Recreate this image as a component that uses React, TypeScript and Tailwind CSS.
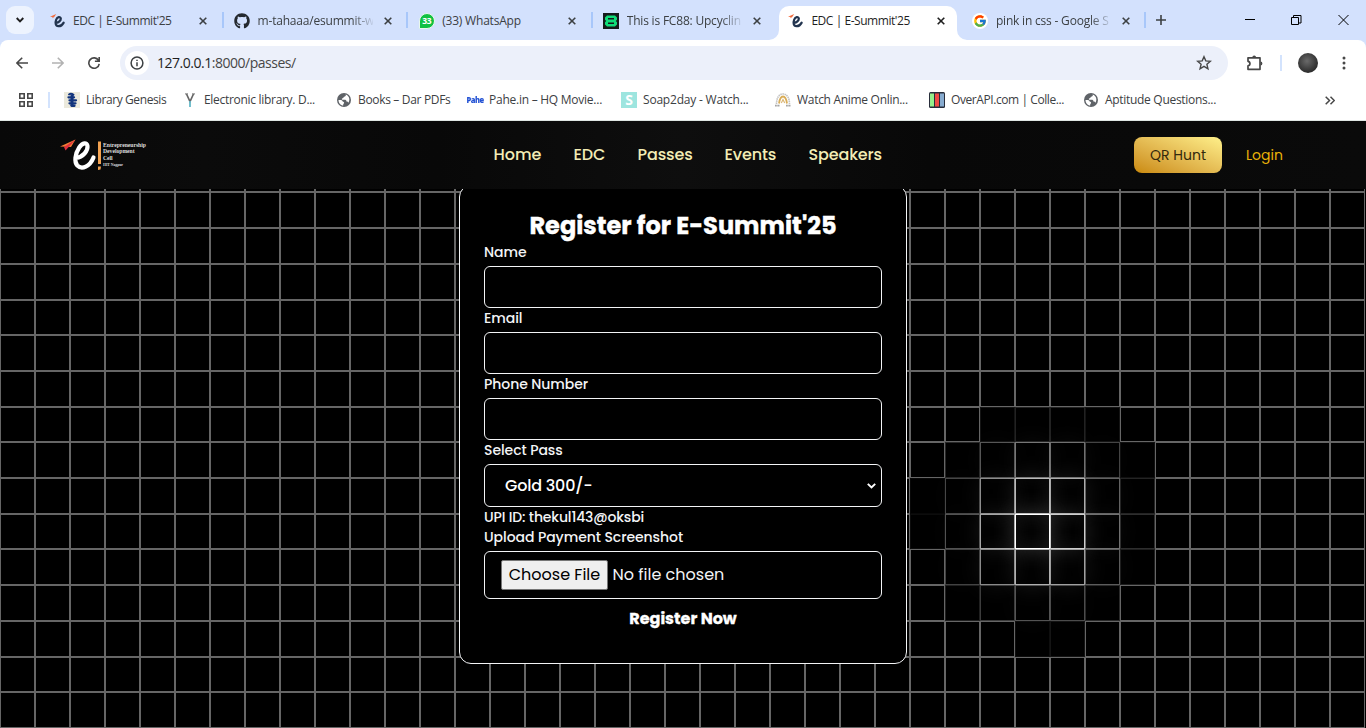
import React from "react";
import { FaGithub } from "react-icons/fa";
import { FcGoogle } from "react-icons/fc";

const uiFont = "font-['Open_Sans','Noto_Sans',sans-serif]";
const siteFont = "font-['Poppins','Inter',sans-serif]";

function Favicon() {
  return (
    <svg width="16" height="16" viewBox="0 0 16 16" fill="none">
      <path d="M6.1 9.800 C8.6 9.500 11 7.600 10.800 5.500 C10.4 3.200 7.4 3.800 6.2 6.600 C5 9.600 5.400 13 8.400 13.200 C10.600 13.300 12.500 11.800 13.700 9.600" stroke="#22344f" strokeWidth="2.2" strokeLinecap="round" />
      <path d="M0 3.800 L6.2 1 L4.6 3.400 L2.6 5.200 L2.4 3.900 Z" fill="#f26b3d" />
    </svg>
  );
}

function WhatsApp() {
  return (
    <span className="flex size-4 items-center justify-center rounded-full rounded-bl-[3px] border border-[#e9f8ec] bg-[#10c143] font-['Open_Sans',sans-serif] text-[8.500px] font-bold tracking-[-0.3px] text-white">
      33
    </span>
  );
}

function Freecodecamp() {
  return (
    <svg width="16" height="16" viewBox="0 0 16 16">
      <rect width="16" height="16" fill="#151a1a" />
      <path d="M4 2.500h8l2 2v2.200L12.800 8 14 9.300v2.200l-2 2H4l-2-2V9.300L3.200 8 2 6.700V4.500z" fill="#10dc78" />
      <path d="M5 5.700h6M5 10.300h6" stroke="#151a1a" strokeWidth="1.600" />
    </svg>
  );
}

function Google() {
  return (
    <span className="flex size-4 items-center justify-center rounded-full bg-white">
      <FcGoogle size={14} />
    </span>
  );
}

function Cross({ dark }: { dark?: boolean }) {
  return (
    <svg width="8" height="8" viewBox="0 0 8 8" className="shrink-0">
      <path d="M0.700 0.700 7.300 7.300M7.300 0.700 0.700 7.300" stroke={dark ? "#1f1f1f" : "#3c4043"} strokeWidth="1.600" />
    </svg>
  );
}

type TabInfo = { title: string; icon: React.ReactNode; active?: boolean; fade?: boolean; sep?: boolean; tracking: string };

const tabs: TabInfo[] = [
  { title: "EDC | E-Summit'25", icon: <Favicon />, sep: true, tracking: "tracking-[-0.45px]" },
  { title: "m-tahaaa/esummit-w", icon: <FaGithub size={16} color="#24292f" />, fade: true, sep: true, tracking: "tracking-[-0.2px]" },
  { title: "(33) WhatsApp", icon: <WhatsApp />, sep: true, tracking: "tracking-[-0.2px]" },
  { title: "This is FC88: Upcyclin", icon: <Freecodecamp />, fade: true, tracking: "tracking-[-0.2px]" },
  { title: "EDC | E-Summit'25", icon: <Favicon />, active: true, tracking: "tracking-[-0.45px]" },
  { title: "pink in css - Google S", icon: <Google />, fade: true, sep: true, tracking: "tracking-[-0.2px]" },
];

function Tab({ tab }: { tab: TabInfo }) {
  return (
    <div className="flex h-[34px] w-[184.600px] shrink-0">
      <div className={`relative flex w-[178px] items-center pb-[8px] pl-[9px] pt-[4px] ${tab.active ? "rounded-t-[10px] bg-white" : ""}`}>
        {tab.active && (
          <>
            <svg className="absolute -left-[10px] bottom-0" width="10" height="10"><path d="M10 0v10H0A10 10 0 0 0 10 0" fill="#fff" /></svg>
            <svg className="absolute -right-[10px] bottom-0" width="10" height="10"><path d="M0 0v10h10A10 10 0 0 1 0 0" fill="#fff" /></svg>
          </>
        )}
        <span className="mr-[7.500px] flex size-4 shrink-0 items-center justify-center">{tab.icon}</span>
        <span
          className={`w-[115px] shrink-0 overflow-hidden whitespace-nowrap text-[12px] leading-4 ${tab.tracking} ${tab.active ? "text-[#1f1f1f]" : "text-[#3c4043]"} ${tab.fade ? "[mask-image:linear-gradient(90deg,#000_94px,transparent_117px)]" : ""}`}
        >
          {tab.title}
        </span>
        <span className="ml-[11px]"><Cross dark={tab.active} /></span>
      </div>
      <div className="flex w-[6.600px] pl-[3px] pt-[6px]">
        {tab.sep && <span className="h-4 w-[2px] bg-[#a8c7fa]" />}
      </div>
    </div>
  );
}

function TabStrip() {
  return (
    <div className="flex h-[40px] bg-[#d3e1fd] pt-[6px]">
      <div className="ml-[6px] mr-[6.500px] flex size-7 items-center justify-center rounded-[9px] bg-[#edf3fe]">
        <svg width="8" height="6" viewBox="0 0 8 6" fill="none"><path d="M0.700 1 4 4.300 7.300 1" stroke="#1f1f1f" strokeWidth="1.900" /></svg>
      </div>
      {tabs.map((tab, i) => <Tab key={i} tab={tab} />)}
      <svg className="ml-[7px] mt-[8px]" width="12" height="12" viewBox="0 0 12 12"><path d="M6 1v10M1 6h10" stroke="#3c4043" strokeWidth="1.600" /></svg>
      <div className="ml-auto mr-[17px] flex gap-[36px] pt-[8px]">
        <svg width="10" height="12"><path d="M0 5.500h10" stroke="#000" /></svg>
        <svg width="11" height="12" fill="none" stroke="#000"><path d="M0.500 3.500h7v7h-7zM2.500 3.500v-2h7.500v7.500h-2.500" /></svg>
        <svg width="11" height="12" fill="none" stroke="#000"><path d="M0.500 1 10.500 11M10.500 1 0.500 11" /></svg>
      </div>
    </div>
  );
}

function Toolbar() {
  return (
    <div className="bg-[#d3e1fd]">
      <div className="flex h-[46px] items-center rounded-t-[8px] bg-white pl-[16px]">
        <svg width="12" height="12" viewBox="0 0 12 12" fill="none" stroke="#474747" strokeWidth="1.600"><path d="M12 6H1M6.200 0.700 0.900 6l5.300 5.300" /></svg>
        <svg className="ml-[24px]" width="12" height="12" viewBox="0 0 12 12" fill="none" stroke="#b2b2b2" strokeWidth="1.600"><path d="M0 6h11M5.800 0.700 11.100 6l-5.300 5.300" /></svg>
        <svg className="ml-[24px]" width="12" height="12" viewBox="0 0 12 12" fill="none" stroke="#474747" strokeWidth="1.600"><path d="M10.500 3.400A5.200 5.200 0 1 0 11.200 6.800M11.200 0v4.300H6.900" /></svg>
        <div className="ml-[20px] flex h-[34px] w-[1108px] items-center rounded-full bg-[#ecf0fa] pl-[5px] pr-[16px]">
          <span className="flex size-6 items-center justify-center rounded-full bg-white">
            <svg width="14" height="14" viewBox="0 0 14 14" fill="none" stroke="#3c4043" strokeWidth="1.500"><circle cx="7" cy="7" r="5.900" /><path d="M7 6.200v4M7 3.700v1.400" /></svg>
          </span>
          <span className="ml-[8px] text-[14px] leading-5 tracking-[-0.480px] text-[#474747]"><span className="text-[#1f1f1f]">127.0.0.1</span>:8000/passes/</span>
          <svg className="ml-auto" width="16" height="16" viewBox="0 0 16 16" fill="none" stroke="#474747" strokeWidth="1.400"><path d="m8 1.700 1.800 4.200 4.600.4-3.500 3 1.050 4.500L8 11.400l-3.950 2.400L5.100 9.300l-3.500-3 4.600-.4z" /></svg>
        </div>
        <svg className="ml-[18px]" width="18" height="18" viewBox="0 0 18 18"><path d="M2 3.800h12v11.500H2v-3.400c2.600-.4 2.600-4.200 0-4.600z" fill="none" stroke="#474747" strokeWidth="1.700" strokeLinejoin="round" /><path d="M6.300 3.400a1.900 1.900 0 0 1 3.800 0zM14.500 7.600a1.900 1.900 0 0 1 0 3.800z" fill="#474747" /></svg>
        <span className="ml-[16px] h-4 w-[2px] bg-[#d3e3fd]" />
        <span className="ml-[16px] size-5 rounded-full bg-[radial-gradient(circle_at_45%_40%,#6a6a6a,#3a3a3a_55%,#161616)]" />
        <svg className="ml-[24px]" width="4" height="14" viewBox="0 0 4 14" fill="#474747"><circle cx="2" cy="2" r="1.500" /><circle cx="2" cy="7" r="1.500" /><circle cx="2" cy="12" r="1.500" /></svg>
      </div>
    </div>
  );
}

function Globe() {
  return (
    <svg width="14" height="14" viewBox="0 0 14 14">
      <circle cx="7" cy="7" r="7" fill="#5f6368" />
      <path d="M8.500 1.500c1 1.200-.3 2-1.400 2.300-.8.300-.2 1.300-1.500 1.500-.8.200-1 .9-.4 1.500h3.200c1 .4 1 1.300 1 1.800 1.100 0 1.700.5 2 1.200 1.800-2.600 1.300-7-2.900-8.300zM1.500 6.900l2.300.1c1.700.2 1.500 1.500 2.500 1.700 1.200.3.900 1.700.2 2.100-.4.400-.3 1-.3 1.700C3.500 12.300 1.500 9.800 1.500 6.900z" fill="#fff" />
    </svg>
  );
}

function LibraryIcon() {
  return (
    <svg width="16" height="16" viewBox="0 0 16 16">
      <rect width="16" height="16" fill="#ebe9dc" />
      <path d="M5 2.500c1-.8 3-.8 4.500.3" stroke="#12347d" strokeWidth="1.800" strokeLinecap="round" fill="none" />
      <path d="M4.500 5.300h5.500M5.500 8.300h6.500M5.500 11.300h6M7.500 13.800h3" stroke="#12347d" strokeWidth="2.300" strokeLinecap="round" />
      <path d="M8 3v11" stroke="#12347d" strokeWidth="3" />
    </svg>
  );
}

function VIcon() {
  return (
    <svg width="10" height="14" viewBox="0 0 10 14" fill="none"><path d="M1.500 1 5 8.500 8.500 1" stroke="#666" strokeWidth="1.700" /><path d="M0 .900h3M7 .900h3" stroke="#777" /><path d="M5 8v6" stroke="#65b8c8" strokeWidth="1.800" /></svg>
  );
}

function AnimeIcon() {
  return (
    <svg width="16" height="16" viewBox="0 0 16 16" fill="none">
      <path d="M1.500 12C1.500 6 4 2 8 2s6.500 4 6.500 10" stroke="#c4c4c4" strokeWidth="1.600" strokeDasharray="1.500 .6" />
      <path d="M4 11.500C4.500 8 6 4.500 8 4.500s3.500 3.500 4 7" stroke="#d9ad58" strokeWidth="1.800" />
      <path d="M6.300 11 8 7.500 9.700 11" stroke="#dcb878" strokeWidth="1.200" />
      <path d="M0 13.700h5M11 13.700h5" stroke="#a5a5a5" strokeWidth="1.700" strokeDasharray="1.800 .5" />
    </svg>
  );
}

function ApiIcon() {
  return (
    <svg width="16" height="16" viewBox="0 0 16 16"><rect width="16" height="16" rx="1.500" fill="#282d3b" /><path d="M1 1.500h4v13H1z" fill="#96ef8b" /><path d="M6 1.500h4v13H6z" fill="#ef4b45" /><path d="M11 1.500h4v13h-4z" fill="#88acd0" /></svg>
  );
}

const bookmarks = [
  { title: "Library Genesis", icon: <LibraryIcon />, width: "w-[118px]", tracking: "tracking-[-0.400px]" },
  { title: "Electronic library. D...", icon: <VIcon />, width: "w-[154px]", tracking: "tracking-[-0.300px]" },
  { title: "Books – Dar PDFs", icon: <Globe />, width: "w-[131px]", tracking: "tracking-[-0.330px]" },
  { title: "Pahe.in – HQ Movie...", icon: <span className="scale-y-125 font-['Open_Sans',sans-serif] text-[7.500px] font-extrabold tracking-[-0.500px] text-[#2453d4]">Pahe</span>, width: "w-[154px]", tracking: "tracking-[-0.250px]" },
  { title: "Soap2day - Watch...", icon: <span className="flex size-4 items-center justify-center bg-[#9de5df] text-[14px] font-bold leading-4 text-white">S</span>, width: "w-[154px]", tracking: "tracking-[-0.200px]" },
  { title: "Watch Anime Onlin...", icon: <AnimeIcon />, width: "w-[154px]", tracking: "tracking-[-0.300px]" },
  { title: "OverAPI.com | Colle...", icon: <ApiIcon />, width: "w-[154px]", tracking: "tracking-[-0.420px]" },
  { title: "Aptitude Questions...", icon: <Globe />, width: "w-[154px]", tracking: "tracking-[-0.300px]" },
];

function BookmarkBar() {
  return (
    <div className="flex h-[35px] items-center border-b border-[#dfe6e3] bg-white pb-[6px] pl-[19px]">
      <svg width="14" height="14" viewBox="0 0 14 14" fill="none" stroke="#474747" strokeWidth="1.600"><path d="M.8.800h4.400v4.400H.8zM8.800.800h4.400v4.400H8.800zM.8 8.800h4.400v4.400H.8zM8.800 8.800h4.400v4.400H8.800z" /></svg>
      <span className="ml-[15px] mr-[14px] h-4 w-[2px] bg-[#d3e3fd]" />
      {bookmarks.map((b) => (
        <div key={b.title} className={`flex shrink-0 items-center ${b.width}`}>
          <span className="mr-[6px] flex size-4 shrink-0 items-center justify-center">{b.icon}</span>
          <span className={`whitespace-nowrap text-[12px] leading-4 text-[#3c4043] ${b.tracking}`}>{b.title}</span>
        </div>
      ))}
      <svg className="ml-auto mr-[31px]" width="10" height="9" viewBox="0 0 10 9" fill="none" stroke="#474747" strokeWidth="1.500"><path d="m.7.700 3.800 3.800L.7 8.300M5.500.700l3.800 3.800L5.500 8.300" /></svg>
    </div>
  );
}

const COLUMNS = 39;
const ROWS = 17;

// Border brightness (0-255) of the cells around the spotlight, keyed by row then column.
const spotlight: Record<number, Record<number, number>> = {
  8: { 28: 20, 29: 34, 30: 34, 31: 20 },
  9: { 27: 40, 28: 86, 29: 118, 30: 112, 31: 68, 32: 16 },
  10: { 26: 8, 27: 70, 28: 140, 29: 185, 30: 172, 31: 98, 32: 36 },
  11: { 26: 12, 27: 82, 28: 165, 29: 255, 30: 205, 31: 112, 32: 46 },
  12: { 27: 66, 28: 138, 29: 176, 30: 160, 31: 92, 32: 30 },
  13: { 27: 32, 28: 60, 29: 84, 30: 76, 31: 42 },
  14: { 29: 14, 30: 20 },
};

function GridBackdrop() {
  const cells = [];
  for (let r = 0; r < ROWS; r++) {
    for (let c = 0; c < COLUMNS; c++) {
      const v = spotlight[r]?.[c];
      const style =
        v === undefined
          ? undefined
          : {
              borderColor: `rgb(${v},${v},${v})`,
              boxShadow: v > 60 ? `0 0 24px rgba(255,255,255,${((v / 255) ** 2 * 0.24).toFixed(3)})` : undefined,
            };
      cells.push(<span key={`${r}-${c}`} className="border border-[#666]" style={style} />);
    }
  }
  return (
    <div className="col-start-1 row-start-1 grid h-[607px] w-[1365px] grid-cols-[repeat(39,35px)] grid-rows-[repeat(17,minmax(0,1fr))] bg-black">
      {cells}
    </div>
  );
}

function Logo() {
  return (
    <div className="flex h-[34px] w-[90px] items-center">
      <svg className="shrink-0" width="42" height="34" viewBox="59 138 42 34" fill="none">
        <path d="M76 158C83 157 88 151 87.500 146c-.5-4-5-3.500-8.300 1.500-4.200 6.500-5.200 14.500-1.900 18 4.500 4.500 12.700 1 16.200-8" stroke="#fff" strokeWidth="4.200" strokeLinecap="round" />
        <path d="M60 146.500 75.500 139.500 71 147z" fill="#f47b35" />
        <path d="M64 147 75.500 139.500 65.500 150.500z" fill="#df2f3d" />
        <path d="M98 141.500h3v22.500h-3zM98 166.500h3l-.5 3-2.500.5z" fill="#f2a251" />
      </svg>
      <div className="ml-[2px] whitespace-nowrap font-['Liberation_Serif',serif] text-[5.700px] font-bold leading-[6.300px] tracking-[-0.030px] text-[#ddd]">
        <div>Entrepreneurship</div>
        <div>Development</div>
        <div>Cell</div>
        <div className="pt-[1px] text-[3.800px]">IIIT Nagpur</div>
      </div>
    </div>
  );
}

const links = [
  { label: "Home", width: "w-[80px]", tracking: "tracking-[0px]" },
  { label: "EDC", width: "w-[64px]", tracking: "tracking-[-0.1px]" },
  { label: "Passes", width: "w-[87px]", tracking: "tracking-[-0.1px]" },
  { label: "Events", width: "w-[84px]", tracking: "tracking-[-0.1px]" },
  { label: "Speakers", width: "w-[75px]", tracking: "tracking-[-0.15px]" },
];

function Navbar() {
  return (
    <nav className="z-10 col-start-1 row-start-1 flex h-[68px] w-full items-center self-start bg-[linear-gradient(90deg,#080808,#0b0b0b_15%,#080808_32%,#0e0e0e_50%,#080808_68%,#0a0a0a)] pl-[59px]">
      <Logo />
      <div className="ml-[344.500px] flex text-[16px] font-medium leading-6 text-[#f3edb5]">
        {links.map((l) => <a key={l.label} className={`whitespace-nowrap ${l.width} ${l.tracking}`}>{l.label}</a>)}
      </div>
      <a className="ml-[250.500px] flex h-9 w-[88px] items-center justify-center whitespace-nowrap rounded-lg bg-gradient-to-tr from-[#ca8a04] to-[#fef08a] text-[14px] text-[#33290d]">QR Hunt</a>
      <a className="ml-[24px] text-[14px] text-[#eab308]">Login</a>
    </nav>
  );
}

function Field({ label }: { label: string }) {
  return (
    <div className="flex flex-col">
      <label className="mb-1 h-5 text-[14px] font-medium leading-5 tracking-[-0.070px] text-[#f3f4f6]">{label}</label>
      <input className="h-[42px] rounded-[6px] border border-[#f3f4f6] bg-black px-4 text-white outline-none" />
    </div>
  );
}

function RegisterCard() {
  return (
    <form className="col-start-1 row-start-1 mt-[64px] flex h-[479px] w-[448px] flex-col self-start justify-self-center rounded-xl border border-[#f3f4f6] bg-black p-6 text-white">
      <h1 className="whitespace-nowrap text-center text-[24px] font-bold leading-8 tracking-[0.030px] [-webkit-text-stroke:0.400px_white]">Register for E-Summit'25</h1>
      <Field label="Name" />
      <Field label="Email" />
      <Field label="Phone Number" />
      <label className="mb-1 h-5 text-[14px] font-medium leading-5 tracking-[-0.070px] text-[#f3f4f6]">Select Pass</label>
      <div className="flex h-[43px] items-center justify-between rounded-[6px] border border-[#f3f4f6] pl-5 pr-[5px]">
        <span className="text-[16px] font-medium tracking-[-0.200px]">Gold 300/-</span>
        <svg width="9" height="6" viewBox="0 0 9 6" fill="none"><path d="M.8.800 4.500 4.500 8.200.800" stroke="#fff" strokeWidth="1.900" /></svg>
      </div>
      <p className="h-5 text-[14px] font-medium leading-5 tracking-[-0.150px] text-[#f3f4f6]">UPI ID: thekul143@oksbi</p>
      <label className="mb-1 h-5 text-[14px] font-medium leading-5 tracking-[-0.070px] text-[#f3f4f6]">Upload Payment Screenshot</label>
      <div className="flex h-[48px] items-center rounded-[6px] border border-[#f3f4f6] pl-4 text-[16px]">
        <span className="flex h-[30px] w-[107px] items-center justify-center whitespace-nowrap rounded-[2px] border border-[#767676] bg-[#efefef] text-black">Choose File</span>
        <span className="ml-[4.500px] whitespace-nowrap text-[#f3f4f6]">No file chosen</span>
      </div>
      <button type="button" className="h-10 text-[16px] font-bold [-webkit-text-stroke:0.300px_white]">Register Now</button>
    </form>
  );
}

export default function App() {
  return (
    <div className="h-[728px] w-[1366px] overflow-hidden bg-black">
      <header className={uiFont}>
        <TabStrip />
        <Toolbar />
        <BookmarkBar />
      </header>
      <main className={`grid h-[607px] ${siteFont}`}>
        <GridBackdrop />
        <RegisterCard />
        <Navbar />
      </main>
    </div>
  );
}
